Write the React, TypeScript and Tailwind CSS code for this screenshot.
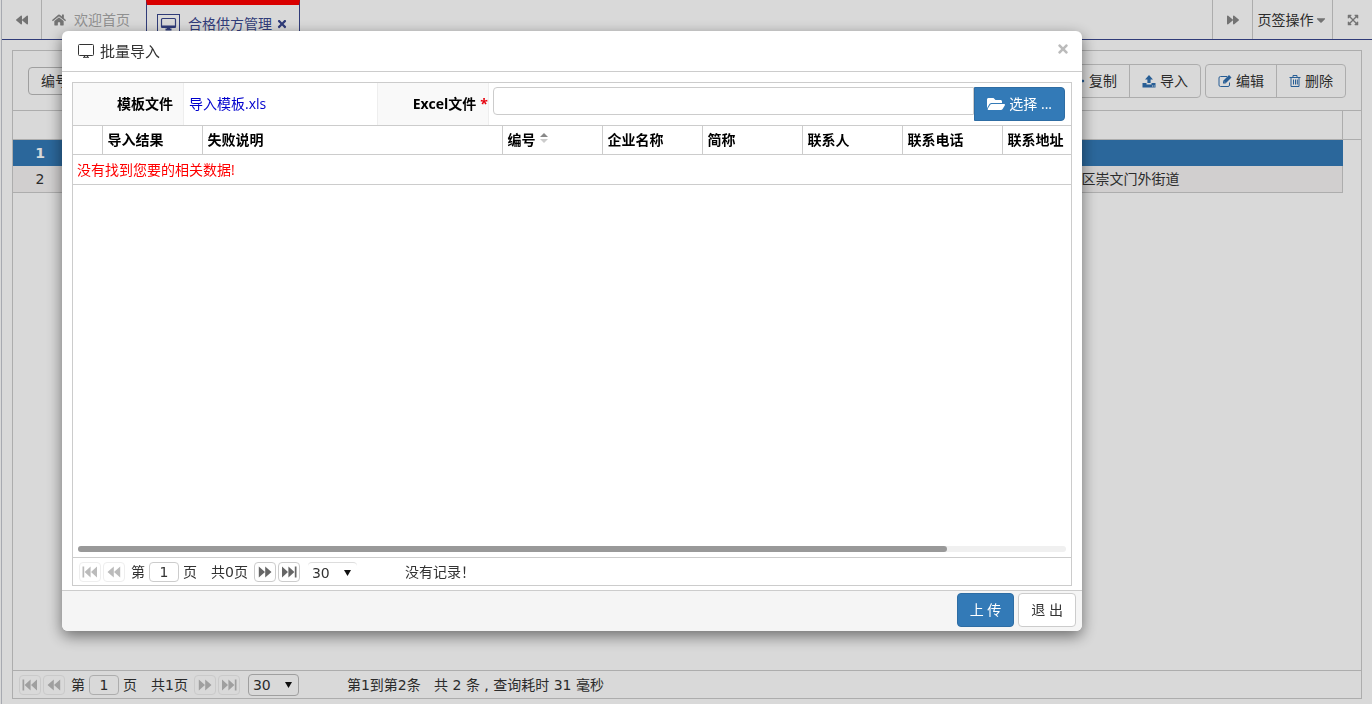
import type { ReactNode } from 'react';
import {
  FaBackward,
  FaCaretDown,
  FaExpandArrowsAlt,
  FaFolderOpen,
  FaForward,
  FaHome,
  FaPlus,
  FaTimes,
} from 'react-icons/fa';

const columns = [
  { label: '导入结果', width: 'w-[100px]' },
  { label: '失败说明', width: 'w-[300px]' },
  { label: '编号', width: 'w-[100px]', sortable: true },
  { label: '企业名称', width: 'w-[100px]' },
  { label: '简称', width: 'w-[100px]' },
  { label: '联系人', width: 'w-[100px]' },
  { label: '联系电话', width: 'w-[100px]' },
  { label: '联系地址', width: 'w-[100px]' },
];

function MonitorIcon({ className }: { className?: string }) {
  return (
    <svg viewBox="0 0 16 14" className={className} fill="none" stroke="currentColor" aria-hidden="true">
      <rect x="0.5" y="0.5" width="15" height="11" rx="1" />
      <path d="M6.500 11.500v1.500M9.500 11.500v1.500M5 13.300h6" />
    </svg>
  );
}

function TabMonitorIcon() {
  return (
    <svg viewBox="0 0 23 20" className="h-5 w-[23px] shrink-0" fill="none" stroke="currentColor" aria-hidden="true">
      <rect x="0.5" y="0.5" width="22" height="19" />
      <rect x="4.5" y="4.500" width="14" height="9" rx="1" strokeWidth="1.200" />
      <path d="M4.500 12.500h14M8.500 15.500h6M10 14h3" strokeWidth="2" />
    </svg>
  );
}

function UploadIcon() {
  return (
    <svg viewBox="0 0 14 14" className="size-3.5" fill="currentColor" aria-hidden="true">
      <path d="M7 1l4 4.5H8.6V9H5.4V5.500H3z" />
      <path d="M0.500 9h4v1.500h5V9h4v4.500h-13zM10 11.500v1h1v-1zM11.700 11.500v1h1v-1z" fillRule="evenodd" />
    </svg>
  );
}

function EditIcon() {
  return (
    <svg viewBox="0 0 14 14" className="size-3.5" fill="none" stroke="currentColor" aria-hidden="true">
      <path d="M9 2.500H2.500a1.500 1.500 0 0 0-1.500 1.500v7A1.500 1.500 0 0 0 2.500 12.500h7.500A1.500 1.500 0 0 0 11.500 11V8.500" />
      <path d="M5 9.500V7L11 1l2.500 2.500-6 6z" fill="currentColor" stroke="none" />
      <path d="M6 7.500l1 1" stroke="white" strokeWidth="0.700" />
    </svg>
  );
}

function TrashIcon() {
  return (
    <svg viewBox="0 0 12 14" className="h-3.5 w-3" fill="none" stroke="currentColor" aria-hidden="true">
      <path d="M0.500 3.500h11M4 3V1.500h4V3M2 4v8.500h8V4M4.500 5.500v5M6.500 5.500v5M8.300 5.500v5" />
    </svg>
  );
}

function SkipIcon({ flip = false, bar = false }: { flip?: boolean; bar?: boolean }) {
  return (
    <svg
      viewBox="0 0 16 12"
      className={flip ? 'h-3 w-4 rotate-180' : 'h-3 w-4'}
      fill="currentColor"
      aria-hidden="true"
    >
      {bar && <path d="M0.500 0.500h1.700v11H0.500z" />}
      {bar ? (
        <path d="M8.600 0.500v11L2.600 6zM15 0.500v11L9 6z" />
      ) : (
        <path d="M7.800 0.500v11L1.500 6zM14.200 0.500v11L8 6z" />
      )}
    </svg>
  );
}

function PagerButton({ label, disabled, children }: { label: string; disabled?: boolean; children: ReactNode }) {
  return (
    <button
      type="button"
      aria-label={label}
      disabled={disabled}
      className="flex h-5 w-[22px] items-center justify-center rounded border border-[#ccc] text-[#666] disabled:border-[#eee] disabled:text-[#bbb]"
    >
      {children}
    </button>
  );
}

type PagerProps = {
  total: string;
  lastDisabled: boolean;
  selectClass: string;
  summary: string;
};

function Pager({ total, lastDisabled, selectClass, summary }: PagerProps) {
  return (
    <div className="flex h-7 shrink-0 items-center border-t border-[#ccc] pl-1.5 font-['DejaVu_Sans','Noto_Sans_CJK_SC',sans-serif] whitespace-nowrap">
      <div className="flex gap-0.5">
        <PagerButton label="首页" disabled>
          <SkipIcon bar />
        </PagerButton>
        <PagerButton label="上一页" disabled>
          <SkipIcon />
        </PagerButton>
      </div>
      <label className="ml-1.5 flex items-center gap-1">
        第
        <input
          type="text"
          defaultValue="1"
          className="h-5 w-[30px] rounded border border-[#ccc] bg-transparent text-center outline-none"
        />
        页
      </label>
      <span className="mr-1.5 ml-3.5">{total}</span>
      <div className="flex gap-0.5">
        <PagerButton label="下一页" disabled={lastDisabled}>
          <SkipIcon flip />
        </PagerButton>
        <PagerButton label="末页" disabled={lastDisabled}>
          <SkipIcon flip bar />
        </PagerButton>
      </div>
      <div className={`relative ml-2 ${selectClass}`}>
        <select
          aria-label="每页条数"
          defaultValue="30"
          className="size-full appearance-none bg-transparent pl-1 outline-none"
        >
          <option>30</option>
        </select>
        <svg viewBox="0 0 7 6" className="pointer-events-none absolute top-[7px] right-1.5 h-1.5 w-[7px]" aria-hidden="true">
          <path d="M0 0h7L3.500 6z" fill="#111" />
        </svg>
      </div>
      <span className="ml-12 whitespace-pre">{summary}</span>
    </div>
  );
}

function TabBar() {
  return (
    <nav className="flex h-10 shrink-0 border-b border-[#39478f] text-[#333]">
      <button type="button" aria-label="向左" className="flex w-10 items-center justify-center border-r border-[#ccc] text-[#888]">
        <FaBackward className="size-3" />
      </button>
      <a href="#home" className="flex w-[104px] items-center gap-2 pl-2.5 text-[#aaa]">
        <FaHome className="size-3.5 text-[#888]" />
        欢迎首页
      </a>
      <a
        href="#supplier"
        className="flex w-[154px] items-center gap-2 border-x border-t-[5px] border-x-[#39478f] border-t-[#f00] pt-1 pl-2.5 text-[#39478f]"
      >
        <TabMonitorIcon />
        <span className="flex items-center gap-1">
          合格供方管理
          <FaTimes className="size-3" />
        </span>
      </a>
      <div className="ml-auto flex">
        <button type="button" aria-label="向右" className="flex w-10 items-center justify-center border-l border-[#ccc] text-[#888]">
          <FaForward className="size-3" />
        </button>
        <button type="button" className="flex w-[81px] items-center justify-center border-x border-[#ccc]">
          页签操作
          <FaCaretDown className="size-3.5 text-[#888]" />
        </button>
        <button type="button" aria-label="全屏" className="flex w-[39px] items-center justify-center text-[#888]">
          <FaExpandArrowsAlt className="size-3" />
        </button>
      </div>
    </nav>
  );
}

function ToolButton({ icon, children }: { icon: ReactNode; children: ReactNode }) {
  return (
    <button type="button" className="flex items-center gap-1 px-3">
      <span className="text-[#2f6fb0]">{icon}</span>
      {children}
    </button>
  );
}

function SupplierList() {
  return (
    <main className="flex grow flex-col px-2.5 pt-2.5 pb-[5px]">
      <div className="flex grow flex-col border border-[#ccc]">
        <div className="flex h-[60px] items-center justify-between border-b border-[#ccc] px-[15px]">
          <button type="button" className="h-7 rounded border border-[#bbb] px-3">
            编号
          </button>
          <div className="flex gap-1">
            <div className="flex h-[34px] divide-x divide-[#ccc] rounded border border-[#ccc]">
              <ToolButton icon={<FaPlus className="size-3.5" />}>复制</ToolButton>
              <ToolButton icon={<UploadIcon />}>导入</ToolButton>
            </div>
            <div className="flex h-[34px] divide-x divide-[#ccc] rounded border border-[#ccc]">
              <ToolButton icon={<EditIcon />}>编辑</ToolButton>
              <ToolButton icon={<TrashIcon />}>删除</ToolButton>
            </div>
          </div>
        </div>
        <div className="flex h-[29px] border-b border-[#ccc] pr-[18px]">
          <div className="grow border-r border-[#ccc]" />
        </div>
        <div className="grow pr-[18px]">
          <table className="w-full table-fixed font-['DejaVu_Sans','Noto_Sans_CJK_SC',sans-serif]">
            <tbody>
              <tr className="h-[26px] bg-[#337ab7] text-white">
                <th className="w-[54px]">1</th>
                <td />
                <td className="w-[261px]" />
              </tr>
              <tr className="h-[26px] border-r border-b border-[#ccc] bg-[#f6f4f4]">
                <td className="text-center">2</td>
                <td />
                <td>区崇文门外街道</td>
              </tr>
            </tbody>
          </table>
        </div>
        <Pager
          total="共1页"
          lastDisabled
          selectClass="h-[22px] w-[51px] rounded border border-[#bbb]"
          summary="第1到第2条   共 2 条 , 查询耗时 31 毫秒"
        />
      </div>
    </main>
  );
}

function ImportDialog() {
  return (
    <div
      role="dialog"
      aria-labelledby="import-title"
      className="flex min-w-0 grow flex-col rounded-md bg-white shadow-[0_5px_15px_rgba(0,0,0,0.5)]"
    >
      <header className="flex h-[41px] shrink-0 items-center border-b border-[#ccc] pr-3 pl-4">
        <MonitorIcon className="h-3.5 w-4" />
        <h2 id="import-title" className="ml-1.5 text-[15px]">
          批量导入
        </h2>
        <button type="button" aria-label="关闭" className="mb-1 ml-auto text-[#bbb]">
          <FaTimes className="size-3.5" />
        </button>
      </header>

      <div className="flex grow flex-col px-2.5 pt-2.5 pb-1">
        <div className="flex grow flex-col border border-[#ccc]">
          <form className="flex h-[42px] shrink-0 text-black">
            <div className="flex w-[111px] shrink-0 items-center justify-end border-r border-[#eee] bg-[#f9f9f9] pr-2.5 font-bold">
              模板文件
            </div>
            <div className="flex w-[193px] shrink-0 items-center pl-[5px]">
              <a href="#template" className="text-[#0000cd]">
                导入模板.xls
              </a>
            </div>
            <label
              htmlFor="excel-file"
              className="flex w-[112px] shrink-0 items-center justify-end gap-1 border-x border-[#eee] bg-[#f9f9f9] font-bold"
            >
              Excel文件
              <span className="text-red-600">*</span>
            </label>
            <div className="flex min-w-0 grow items-start pt-1 pr-1.5 pl-1">
              <input id="excel-file" type="text" className="h-7 min-w-0 grow rounded-l border border-[#ccc] px-2 outline-none" />
              <button
                type="button"
                className="flex h-[34px] shrink-0 items-center gap-1 rounded-r border border-[#2e6da4] bg-[#337ab7] px-3 text-white"
              >
                <FaFolderOpen className="size-[18px]" />
                选择 ...
              </button>
            </div>
          </form>

          <div className="grow overflow-hidden">
            <table className="w-full table-fixed border-y border-[#ccc]">
              <thead>
                <tr className="h-[29px] border-b border-[#ccc] text-left text-black">
                  <th className="w-[29px]" />
                  {columns.map((col) => (
                    <th key={col.label} className={`border-l border-[#ccc] pl-[5px] whitespace-nowrap ${col.width}`}>
                      <span className="flex items-center gap-1">
                        {col.label}
                        {col.sortable && (
                          <svg viewBox="0 0 8 10" className="mb-1 h-2.5 w-2" aria-hidden="true">
                            <path d="M4 0l4 4H0z" fill="#888" />
                            <path d="M0 6h8L4 10z" fill="#ccc" />
                          </svg>
                        )}
                      </span>
                    </th>
                  ))}
                </tr>
              </thead>
              <tbody>
                <tr className="h-[30px]">
                  <td colSpan={columns.length + 1} className="pl-1 text-[#f00]">
                    没有找到您要的相关数据!
                  </td>
                </tr>
              </tbody>
            </table>
          </div>

          <div className="mx-[5px] mb-[5px] h-1.5 rounded-full bg-[#f0f0f0]">
            <div className="h-full w-[88%] rounded-full bg-[#999]" />
          </div>
          <Pager
            total="共0页"
            lastDisabled={false}
            selectClass="h-5 w-[49px] rounded border-t border-[#ddd]"
            summary="没有记录！"
          />
        </div>
      </div>

      <footer className="flex h-[41px] shrink-0 items-start justify-end gap-1 rounded-b-md border-t border-[#ccc] bg-[#f5f5f5] pt-0.5 pr-1.5">
        <button type="button" className="h-[34px] rounded border border-[#2e6da4] bg-[#337ab7] px-3 text-white">
          上 传
        </button>
        <button type="button" className="h-[34px] rounded border border-[#ccc] bg-white px-3">
          退 出
        </button>
      </footer>
    </div>
  );
}

export default function App() {
  return (
    <div className="bg-white font-['Open_Sans','Noto_Sans_CJK_SC',sans-serif] text-sm leading-5 text-[#333]">
      <div className="ml-px flex min-h-screen flex-col border-l border-[#c5c8d0]">
        <TabBar />
        <SupplierList />
      </div>
      <div className="fixed inset-0 flex bg-black/15 pt-[31px] pr-[290px] pb-[73px] pl-[62px]">
        <ImportDialog />
      </div>
    </div>
  );
}
